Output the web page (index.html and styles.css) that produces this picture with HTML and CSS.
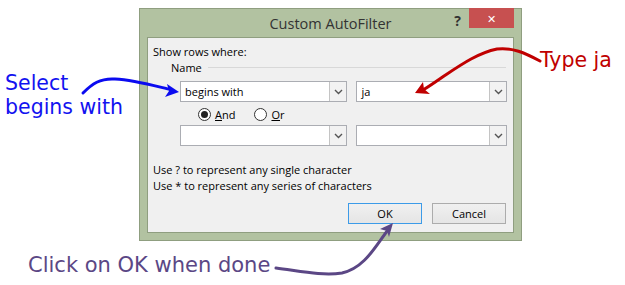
FILE: index.html
```html
<!DOCTYPE html>
<html lang="en">
<head>
    <meta charset="UTF-8">
    <title>Custom AutoFilter</title>
    <link rel="stylesheet" href="styles.css">
</head>
<body>
    <div class="page">
        <div class="dialog">
            <div class="titlebar">
                <span class="title">Custom AutoFilter</span>
                <span class="help">?</span>
                <span class="close">&#x2715;</span>
            </div>
            <div class="panel">
                <div class="line-text">Show rows where:</div>
                <div class="group-head">
                    <span>Name</span>
                    <span class="rule"></span>
                </div>
                <div class="combo-row">
                    <div class="combo wide"><span class="value">begins with</span><span class="drop"><svg width="9" height="6" viewBox="0 0 9 6"><path d="M1 1 L4.5 4.5 L8 1" fill="none" stroke="#555" stroke-width="1.4"/></svg></span></div>
                    <div class="combo"><span class="value">ja</span><span class="drop"><svg width="9" height="6" viewBox="0 0 9 6"><path d="M1 1 L4.5 4.5 L8 1" fill="none" stroke="#555" stroke-width="1.4"/></svg></span></div>
                </div>
                <div class="radio-row">
                    <label class="radio checked"><span class="dot"></span><span><u>A</u>nd</span></label>
                    <label class="radio"><span class="dot"></span><span><u>O</u>r</span></label>
                </div>
                <div class="combo-row second">
                    <div class="combo wide"><span class="value"></span><span class="drop"><svg width="9" height="6" viewBox="0 0 9 6"><path d="M1 1 L4.5 4.5 L8 1" fill="none" stroke="#555" stroke-width="1.4"/></svg></span></div>
                    <div class="combo"><span class="value"></span><span class="drop"><svg width="9" height="6" viewBox="0 0 9 6"><path d="M1 1 L4.5 4.5 L8 1" fill="none" stroke="#555" stroke-width="1.4"/></svg></span></div>
                </div>
                <div class="hints">
                    <div>Use ? to represent any single character</div>
                    <div>Use * to represent any series of characters</div>
                </div>
                <div class="buttons">
                    <span class="btn default">OK</span>
                    <span class="btn">Cancel</span>
                </div>
            </div>
        </div>

        <!-- callouts -->
        <div class="note note-select">Select<br>begins with</div>
        <div class="note note-type">Type ja</div>
        <div class="note note-click">Click on OK when done</div>
        <svg class="arrows" width="625" height="285" viewBox="0 0 625 285">
            <path d="M83 93 C92 84 100 78 115 79 C135 80 155 86 172 90" fill="none" stroke="#0b0bf0" stroke-width="3" stroke-linecap="round"/>
            <path d="M179 92 L167 84 L169 91 L165 97 Z" fill="#0b0bf0"/>
            <path d="M540 61 C525 53 512 47 497 49 C478 53 462 64 444 76 C434 83 428 87 423 90" fill="none" stroke="#c00000" stroke-width="3" stroke-linecap="round"/>
            <path d="M415 93 L423 82 L424 89 L430 94 Z" fill="#c00000"/>
            <path d="M276 268 C300 271 322 276 342 273 C365 268 376 245 388 230" fill="none" stroke="#5b4785" stroke-width="3" stroke-linecap="round"/>
            <path d="M393 223 L380 229 L387 231 L389 237 Z" fill="#5b4785"/>
        </svg>
    </div>
</body>
</html>
```

FILE: styles.css
```css
*{
    box-sizing: border-box;
}
body{
    margin: 0;
    background: #fff;
}
.page{
    position: relative;
    width: 625px;
    height: 285px;
    padding: 8px 0 0 139px;
    overflow: hidden;
}
/*
* Dialog frame
*/
.dialog{
    width: 383px;
    height: 233px;
    background: #b2c2a1;
    border: 1px solid #8f9e80;
    display: flex;
    flex-direction: column;
    padding: 0 7px 7px 7px;
    font-family: "Open Sans", "Noto Sans", sans-serif;
    color: #000;
}
.titlebar{
    height: 28px;
    display: flex;
    align-items: flex-start;
    position: relative;
}
.title{
    position: absolute;
    left: 0;
    right: 0;
    top: 5px;
    text-align: center;
    font-size: 14.5px;
    color: #333;
}
.help{
    margin-left: auto;
    margin-top: 2px;
    margin-right: 8px;
    font-size: 14px;
    font-weight: bold;
    color: #333;
    position: relative;
}
.close{
    width: 45px;
    height: 20px;
    margin-top: -1px;
    background: #c75050;
    color: #fff;
    font-size: 11px;
    display: flex;
    align-items: center;
    justify-content: center;
    position: relative;
}
/*
* Inner panel
*/
.panel{
    flex: 1;
    background: #f0f0f0;
    border: 1px solid #8f9e80;
    padding: 6px 6px 0 5px;
    font-size: 11px;
    display: flex;
    flex-direction: column;
}
.line-text{
    height: 15px;
    line-height: 15px;
}
.group-head{
    display: flex;
    align-items: center;
    height: 15px;
    margin-top: 1px;
    padding-left: 18px;
}
.group-head .rule{
    flex: 1;
    height: 1px;
    background: #d8d8d8;
    margin-left: 6px;
    margin-right: 1px;
}
.combo-row{
    display: flex;
    gap: 9px;
    margin-top: 6px;
    padding-left: 27px;
}
.combo-row.second{
    margin-top: 3px;
}
.combo{
    width: 151px;
    height: 21px;
    display: flex;
    background: #fff;
    border: 1px solid #abadb3;
}
.combo.wide{
    width: 168px;
}
.combo .value{
    flex: 1;
    padding-left: 4px;
    line-height: 19px;
    color: #000;
}
.combo .drop{
    width: 17px;
    border-left: 1px solid #c4c4c4;
    background: #f2f2f2;
    display: flex;
    align-items: center;
    justify-content: center;
}
.radio-row{
    display: flex;
    gap: 19px;
    height: 16px;
    margin-top: 4px;
    padding-left: 45px;
    align-items: center;
}
.radio{
    display: flex;
    align-items: center;
    gap: 4px;
}
.radio .dot{
    width: 13px;
    height: 13px;
    border-radius: 50%;
    border: 1px solid #333;
    background: #fff;
    display: flex;
    align-items: center;
    justify-content: center;
}
.radio.checked .dot::after{
    content: "";
    width: 7px;
    height: 7px;
    border-radius: 50%;
    background: #222;
}
.hints{
    margin-top: 16px;
    line-height: 16px;
}
.buttons{
    display: flex;
    justify-content: flex-end;
    gap: 10px;
    margin-top: 9px;
    padding-right: 1px;
}
.btn{
    width: 74px;
    height: 21px;
    border: 1px solid #acacac;
    background: linear-gradient(#f0f0f0, #e5e5e5);
    display: flex;
    align-items: center;
    justify-content: center;
    font-size: 11px;
}
.btn.default{
    border-color: #3c9be8;
}
/*
* Callouts
*/
.note{
    position: absolute;
    font-family: "DejaVu Sans", Verdana, sans-serif;
    font-size: 20.5px;
    line-height: 24px;
}
.note-select{
    left: 5px;
    top: 71px;
    color: #1212f0;
}
.note-type{
    left: 540px;
    top: 48px;
    color: #c00000;
}
.note-click{
    left: 28px;
    top: 253px;
    font-size: 21px;
    color: #5b4785;
}
.arrows{
    position: absolute;
    left: 0;
    top: 0;
    pointer-events: none;
}
```
